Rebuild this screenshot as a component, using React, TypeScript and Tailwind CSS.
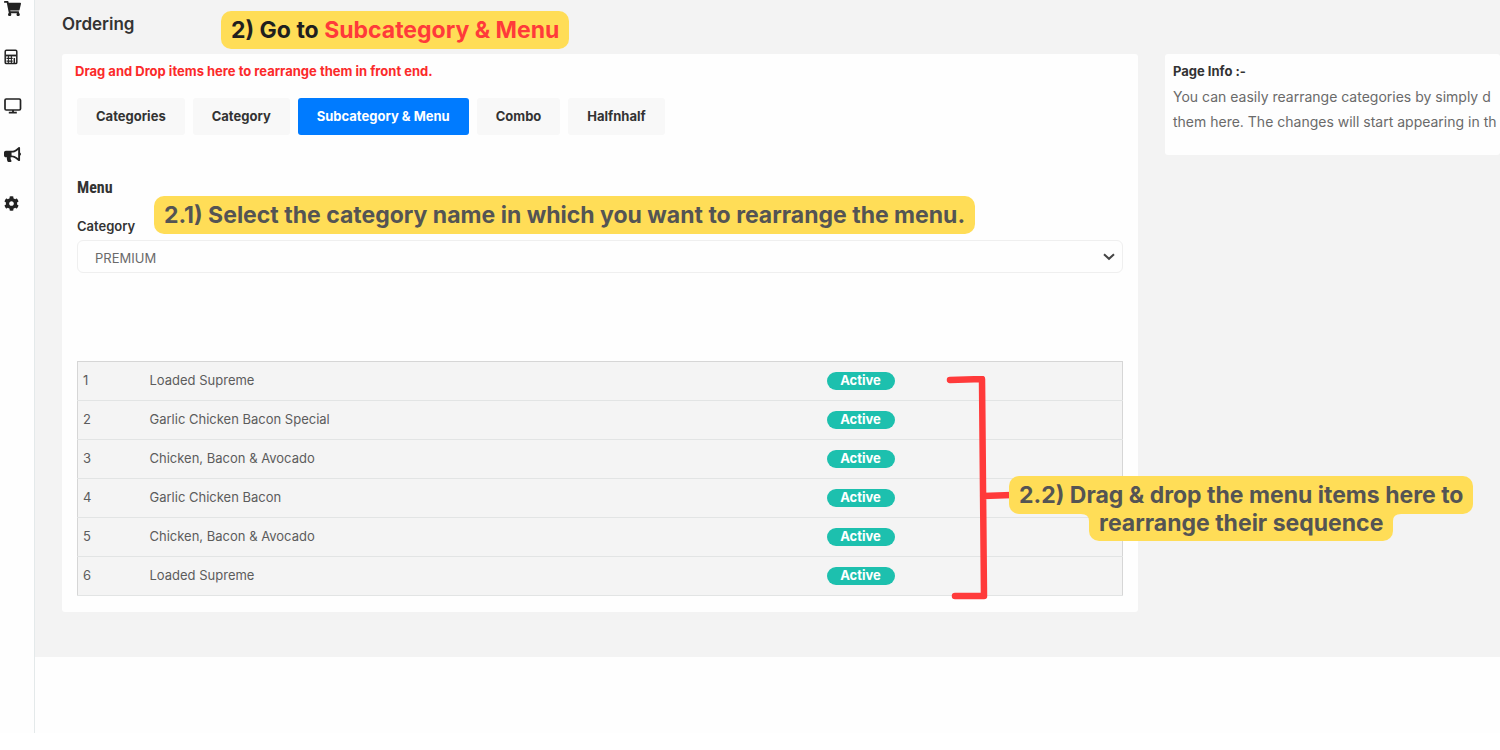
import { useState } from "react";
import { FaBullhorn, FaCog, FaShoppingCart } from "react-icons/fa";

const tabs = ["Categories", "Category", "Subcategory & Menu", "Combo", "Halfnhalf"];

const items = [
  "Loaded Supreme",
  "Garlic Chicken Bacon Special",
  "Chicken, Bacon & Avocado",
  "Garlic Chicken Bacon",
  "Chicken, Bacon & Avocado",
  "Loaded Supreme",
];

function CalculatorIcon() {
  return (
    <svg viewBox="0 0 14 16" className="w-[14px] h-4" fill="none" stroke="currentColor">
      <rect x="1.2" y="1.2" width="11.6" height="13.4" rx="1.2" strokeWidth="1.5" />
      <path d="M2 6.5h10" strokeWidth="1.8" />
      <path d="M2.5 9.4h6.2M2.5 12.2h6.2" strokeWidth="1.3" />
      <path d="M4.4 7v7M7.4 7v7" strokeWidth="1" />
      <path d="M10.3 9v5" strokeWidth="1.5" />
    </svg>
  );
}

function DesktopIcon() {
  return (
    <svg viewBox="0 0 18 16" className="w-[18px] h-4" fill="none" stroke="currentColor">
      <rect x="1" y="1" width="15.5" height="11" rx="1.2" strokeWidth="1.7" />
      <path d="M9 12v2.6M4.8 14.6h8" strokeWidth="1.8" />
    </svg>
  );
}

export default function OrderingPage() {
  const [active, setActive] = useState("Subcategory & Menu");

  return (
    <div className="flex items-start bg-[#fefefe] overflow-hidden font-['Inter',sans-serif] text-[13px] text-[#5c5c5c]">
      {/* Sidebar */}
      <aside className="w-[35px] h-[733px] shrink-0 border-r border-[#e4e9ea] text-[#222]">
        <nav className="flex flex-col gap-8 pl-1">
          <a href="#orders" aria-label="Orders" className="flex h-4 items-center">
            <FaShoppingCart size={17} />
          </a>
          <a href="#billing" aria-label="Billing" className="flex h-[17px] items-center">
            <CalculatorIcon />
          </a>
          <a href="#display" aria-label="Display" className="flex h-[17px] items-center">
            <DesktopIcon />
          </a>
          <a href="#marketing" aria-label="Marketing" className="flex h-[17px] items-center">
            <FaBullhorn size={17} />
          </a>
          <a href="#settings" aria-label="Settings" className="flex h-4 items-center">
            <FaCog size={15} />
          </a>
        </nav>
      </aside>

      <main className="flex-1 min-w-0 bg-[#f3f3f3] pl-[27px] pb-[45px]">
        {/* Heading */}
        <header className="relative h-[54px] pt-3">
          <h1 className="text-[17px] leading-6 font-semibold text-[#333]">Ordering</h1>
          <p className="absolute left-[159px] top-[11px] h-[38px] px-[10px] rounded-[10px] bg-[#ffdd57] text-[23px] leading-[38px] font-bold text-[#1f1f1f] whitespace-nowrap">
            2) Go to <span className="text-[#ff3a3a]">Subcategory &amp; Menu</span>
          </p>
        </header>

        <div className="grid grid-cols-[minmax(0,1fr)_335px] gap-[27px] items-start">
          <section className="relative rounded-[3px] bg-[#fefefe] px-[15px] pb-4">
            <p className="-ml-[2px] pt-[7px] leading-5 font-bold text-[#fb2a2a]">
              Drag and Drop items here to rearrange them in front end.
            </p>

            {/* Tabs */}
            <div className="mt-[17px] flex gap-2">
              {tabs.map((tab) => (
                <button
                  key={tab}
                  type="button"
                  onClick={() => setActive(tab)}
                  className={
                    tab === active
                      ? "h-[37px] px-[19px] rounded-[3px] bg-[#007bff] font-bold text-white"
                      : "h-[37px] px-[19px] rounded-[3px] bg-[#f8f8f8] font-bold text-[#333]"
                  }
                >
                  {tab}
                </button>
              ))}
            </div>

            <h2 className="mt-[41px] font-['Roboto_Condensed','Roboto',sans-serif] text-base leading-6 font-bold text-[#333]">
              Menu
            </h2>

            {/* Category picker */}
            <div className="relative mt-4">
              <label htmlFor="category" className="block leading-5 font-semibold text-[#333]">
                Category
              </label>
              <p className="absolute left-[77px] -top-[20px] h-[38px] px-[10px] rounded-[10px] bg-[#ffdd57] text-[23px] leading-[38px] font-bold text-[#545454] whitespace-nowrap">
                2.1) Select the category name in which you want to rearrange the menu.
              </p>
              <select
                id="category"
                className="mt-1 block w-full h-[33px] appearance-none rounded-md border border-[#efefef] bg-transparent pt-1 pl-[17px] text-[#6a6a6a]"
              >
                <option>PREMIUM</option>
                <option>CLASSIC</option>
              </select>
              <svg
                viewBox="0 0 12 8"
                className="pointer-events-none absolute right-2 bottom-3 w-3 h-2"
                fill="none"
                stroke="#444"
                strokeWidth="2"
              >
                <path d="M1 1.2l5 4.6 5-4.6" />
              </svg>
            </div>

            {/* Sortable rows */}
            <table className="mt-[88px] w-full table-fixed border-collapse border border-[#d6d6d6] bg-[#f4f4f4]">
              <tbody>
                {items.map((item, i) => (
                  <tr key={i} draggable className="h-[39px] border-b border-[#e2e4e4]">
                    <td className="w-[66px] pl-[5px]">{i + 1}</td>
                    <td className="pl-[6px]">{item}</td>
                    <td className="w-[296px]">
                      <span className="flex h-[18px] w-[68px] items-center justify-center rounded-full bg-[#1dc0ae] font-bold text-white">
                        Active
                      </span>
                    </td>
                  </tr>
                ))}
              </tbody>
            </table>

            {/* Bracket round the rows */}
            <svg
              viewBox="0 0 66 224"
              className="absolute right-[126px] bottom-3 w-[66px] h-[224px]"
              fill="none"
              stroke="#ff3a3a"
              strokeWidth="6.5"
              strokeLinecap="round"
              strokeLinejoin="round"
            >
              <path d="M4 4l32-1 2 217H9M37 120l29-1" />
            </svg>
            <p className="absolute left-[947px] bottom-[71px] flex flex-col items-center text-[23px] leading-7 font-bold text-[#545454] whitespace-nowrap">
              <span className="h-[38px] px-[10px] pt-[5px] rounded-[10px] bg-[#ffdd57]">
                2.2) Drag &amp; drop the menu items here to
              </span>
              <span className="relative h-7 px-[10px] -mt-[1px] rounded-b-[10px] bg-[#ffdd57] leading-5">
                rearrange their sequence
                <svg viewBox="0 0 8 8" className="absolute right-full top-0 w-2 h-2" fill="#ffdd57">
                  <path d="M0 0h8v8Q8 1 0 1z" />
                </svg>
                <svg viewBox="0 0 8 8" className="absolute left-full top-0 w-2 h-2" fill="#ffdd57">
                  <path d="M8 0H0v8Q0 1 8 1z" />
                </svg>
              </span>
            </p>
          </section>

          {/* Page info */}
          <section className="h-[101px] overflow-hidden rounded-[3px] bg-[#fefefe] pt-[7px] pl-2">
            <h2 className="leading-5 font-bold text-[#333]">Page Info :-</h2>
            <p className="mt-[3px] text-sm leading-[25px] whitespace-nowrap text-[#6a6a6a]">
              You can easily rearrange categories by simply d
              <br />
              them here. The changes will start appearing in th
            </p>
          </section>
        </div>
      </main>
    </div>
  );
}
